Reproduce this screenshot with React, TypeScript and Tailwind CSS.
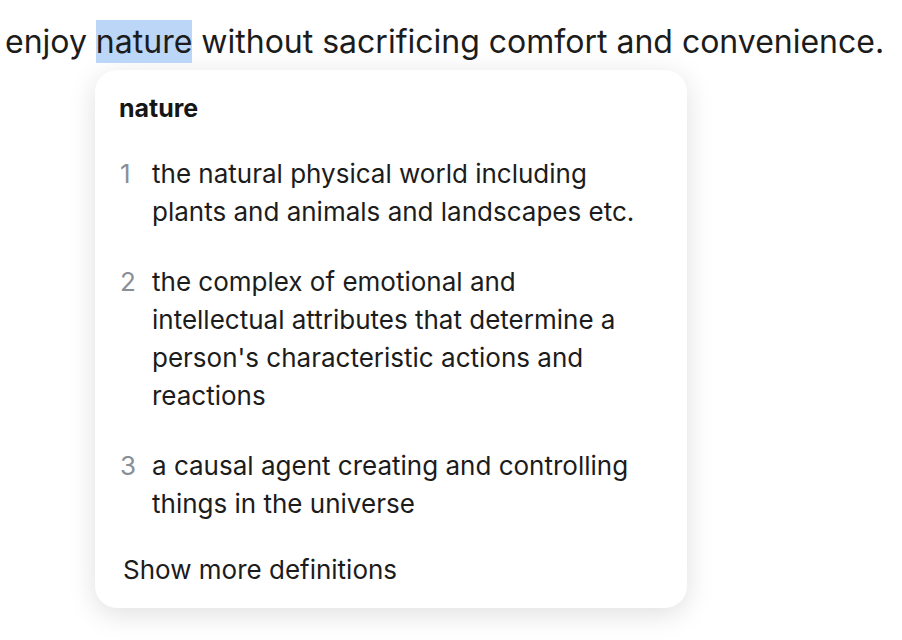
import React from "react";

const definitions = [
  "the natural physical world including plants and animals and landscapes etc.",
  "the complex of emotional and intellectual attributes that determine a person's characteristic actions and reactions",
  "a causal agent creating and controlling things in the universe",
];

const DefinitionCard = () => {
  return (
    <div className="ml-[95px] mt-[7px] w-[592px] rounded-[22px] bg-white pl-6 pr-6 pt-[23px] pb-[19px] shadow-[0_6px_28px_rgba(0,0,0,0.13)]">
      <div className="text-[25px] font-bold leading-[30px] text-[#161616]">nature</div>
      <ol className="mt-[32px] flex flex-col gap-8">
        {definitions.map((text, i) => (
          <li key={i} className="flex">
            <span className="w-[33px] shrink-0 pl-px text-[26px] leading-[38px] text-[#8a8f97]">{i + 1}</span>
            <span className="max-w-[490px] text-[26px] leading-[38px] text-[#1c1c1c]">{text}</span>
          </li>
        ))}
      </ol>
      <button className="mt-[28px] pl-1 text-left text-[26px] leading-[38px] text-[#1c1c1c]">
        Show more definitions
      </button>
    </div>
  );
};

export default function App() {
  return (
    <div className="min-h-[640px] w-[902px] bg-white font-['Inter',sans-serif]">
      <p className="whitespace-nowrap pl-[5px] pt-5 text-[32px] leading-[43px] text-[#1c1c1c]">
        enjoy <span className="inline-block bg-[#bcd6f8]">nature</span> without sacrificing comfort and convenience.
      </p>
      <DefinitionCard />
    </div>
  );
}
